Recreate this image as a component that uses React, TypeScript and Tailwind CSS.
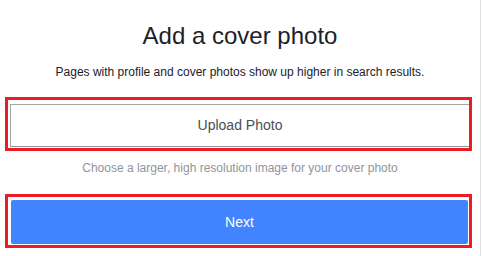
export default function App() {
  return (
    <div
      className="flex h-[256px] w-[481px] flex-col border-r border-[#dddfe2] bg-white"
      style={{ fontFamily: '"Liberation Sans", Arial, sans-serif' }}
    >
      {/* Heading */}
      <h1 className="mt-[22px] text-center text-[24px] leading-[28px] text-[#1d2129]">
        Add a cover photo
      </h1>
      <p className="mt-[14px] text-center text-[12px] leading-[16px] text-[#1d2129]">
        Pages with profile and cover photos show up higher in search results.
      </p>

      {/* Upload */}
      <div className="ml-[5px] mt-[17px] w-[467px] border-[3px] border-[#ed1c24] pb-px pl-[2px] pt-[4px]">
        <button className="flex h-[43px] w-full items-center justify-center border border-r-0 border-[#a3a6ab] border-b-[#8d949e] bg-white text-[14px] text-[#4b4f56]">
          Upload Photo
        </button>
      </div>
      <p className="mt-[9px] text-center text-[12px] leading-[16px] text-[#90949c]">
        Choose a larger, high resolution image for your cover photo
      </p>

      {/* Next */}
      <div className="ml-[5px] mt-[18px] w-[467px] border-[3px] border-[#ed1c24] pb-px pl-[3px] pr-px pt-[3px]">
        <button className="flex h-[44px] w-full items-center justify-center rounded-[2px] bg-[#4283ff] text-[14px] text-white">
          Next
        </button>
      </div>
    </div>
  );
}
